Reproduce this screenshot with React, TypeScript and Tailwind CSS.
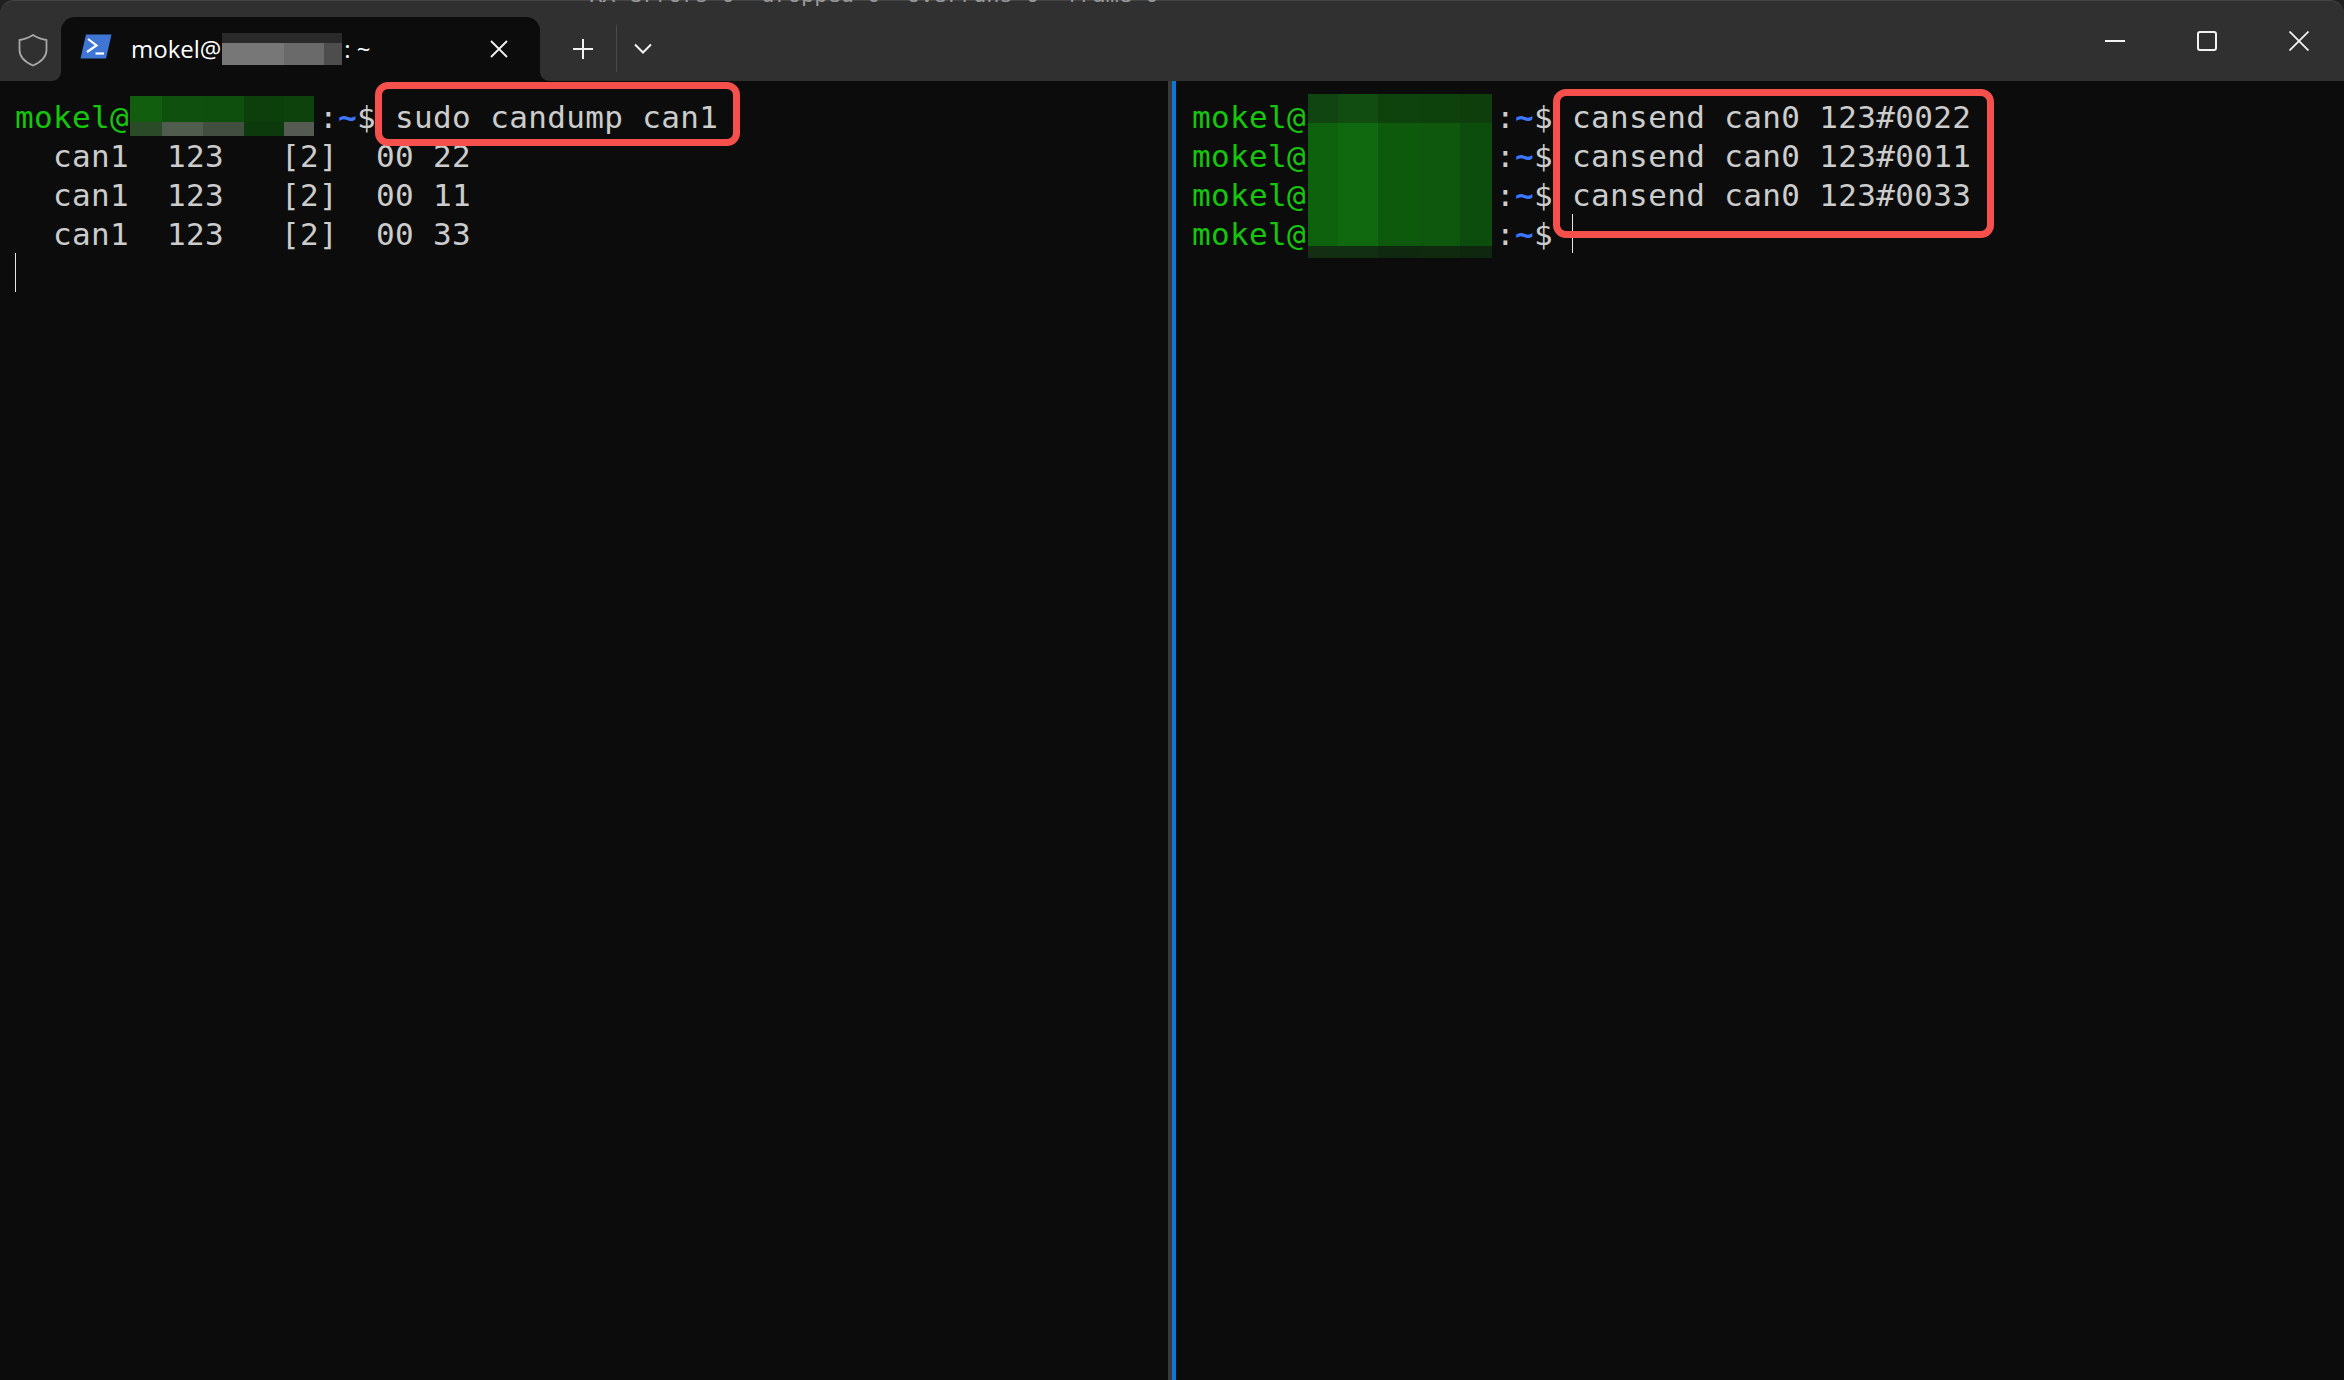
import { ReactNode } from "react";

const mono = "font-['DejaVu_Sans_Mono',monospace] text-[31px] leading-[39px] tracking-[0.34px] whitespace-pre text-[#cccccc]";

// pixelated blur blocks over the host name
const leftCells = [
  "bg-[#125e0f]", "bg-[#10500e]", "bg-[#0f4f0d]", "bg-[#0c3f0b]", "bg-[#0d420c]",
  "bg-[#2a4a28]", "bg-[#505c4e]", "bg-[#424f40]", "bg-[#0c3a0c]", "bg-[#555a52]",
];
const rightCells = [
  "bg-[#104410]", "bg-[#114c10]", "bg-[#0f430e]", "bg-[#0e420d]", "bg-[#0e3e0c]",
  "bg-[#0e620e]", "bg-[#10680f]", "bg-[#0e5a0d]", "bg-[#0e580d]", "bg-[#0c4c0c]",
  "bg-[#142e14]", "bg-[#132f13]", "bg-[#0f280f]", "bg-[#102a10]", "bg-[#0f260f]",
];
const tabCells = [
  "bg-[#2a2a2a]", "bg-[#2a2a2a]", "bg-[#2a2a2a]",
  "bg-[#777777]", "bg-[#6a6a6a]", "bg-[#4d4d4d]",
];

function Prompt({ children }: { children?: ReactNode }) {
  return (
    <div className={mono}>
      <span className="text-[#16c60c]">mokel@</span>
      {"          :"}
      <span className="text-[#3b78ff] font-bold">~</span>
      {"$"}
      {children}
    </div>
  );
}

function Flare({ side }: { side: "left" | "right" }) {
  return (
    <div
      className={
        side === "left"
          ? "absolute bottom-0 -left-[10px] w-[10px] h-[10px] bg-[#0c0c0c]"
          : "absolute bottom-0 -right-[10px] w-[10px] h-[10px] bg-[#0c0c0c]"
      }
    >
      <div
        className={
          side === "left"
            ? "w-full h-full bg-[#303030] rounded-br-[9px]"
            : "w-full h-full bg-[#303030] rounded-bl-[9px]"
        }
      />
    </div>
  );
}

function TitleBar() {
  return (
    <div className="relative flex h-[81px] shrink-0 bg-[#303030] rounded-t-[14px] border-t border-[#454545]">
      <div className="absolute left-[589px] -top-[17px] font-['DejaVu_Sans_Mono',monospace] text-[22px] leading-[22px] whitespace-pre text-[#9a9a9a]">
        RX errors 0  dropped 0  overruns 0  frame 0
      </div>

      <div className="w-[61px] flex items-center justify-center pt-[17px] pl-[4px]">
        <svg width="30" height="34" viewBox="0 0 30 34" fill="none" stroke="#a8a8a8" strokeWidth="1.8" strokeLinejoin="round">
          <path d="M15 2 C20 5 24 6.5 28.5 7 V17 C28.5 24 23 29 15 32.5 C7 29 1.5 24 1.5 17 V7 C6 6.5 10 5 15 2 Z" />
        </svg>
      </div>

      <div className="relative w-[479px] mt-[16px] bg-[#0c0c0c] rounded-t-[14px] flex items-center pl-[19px]">
        <Flare side="left" />
        <Flare side="right" />
        <svg width="32" height="25" viewBox="0 0 32 25" className="shrink-0 -mt-[6px]">
          <path d="M6 0.5 H31.5 L26 24.5 H0.5 Z" fill="#3f76d4" />
          <path d="M8 5 L16.5 11.5 L7 18" fill="none" stroke="#ffffff" strokeWidth="2.2" />
          <path d="M15.5 19.5 H24" fill="none" stroke="#ffffff" strokeWidth="2.2" />
        </svg>
        <div className="relative ml-[19px] font-['Open_Sans',sans-serif] font-medium text-[24px] leading-[32px] whitespace-pre text-white flex items-center">
          <span>mokel@</span>
          <span className="inline-block w-[123px]" />
          <span>: ~</span>
          <div className="absolute left-[91px] top-0 w-[120px] h-[32px] grid grid-cols-[62px_40px_18px] grid-rows-[10px_22px]">
            {tabCells.map((c, i) => (
              <div key={i} className={c} />
            ))}
          </div>
        </div>
        <svg width="18" height="18" viewBox="0 0 18 18" className="absolute left-[429px] top-[23px]" stroke="#f2f2f2" strokeWidth="1.8" fill="none">
          <path d="M1 1 L17 17 M17 1 L1 17" />
        </svg>
      </div>

      <div className="flex items-center pt-[15px] pl-[33px]">
        <svg width="20" height="20" viewBox="0 0 20 20" stroke="#f2f2f2" strokeWidth="2" fill="none">
          <path d="M10 0 V20 M0 10 H20" />
        </svg>
        <div className="w-px h-[47px] bg-[#4a4a4a] ml-[23px]" />
        <svg width="18" height="11" viewBox="0 0 18 11" stroke="#f2f2f2" strokeWidth="2" fill="none" className="ml-[17px]">
          <path d="M1 1.5 L9 9.5 L17 1.5" />
        </svg>
      </div>

      <div className="ml-auto flex h-[79px]">
        <div className="w-[92px] flex items-center justify-center">
          <div className="w-[20px] h-[2px] bg-[#f2f2f2]" />
        </div>
        <div className="w-[92px] flex items-center justify-center">
          <div className="w-[20px] h-[20px] border-2 border-[#f2f2f2] rounded-[3px]" />
        </div>
        <div className="w-[91px] flex items-center justify-center">
          <svg width="20" height="20" viewBox="0 0 20 20" stroke="#f2f2f2" strokeWidth="1.8" fill="none">
            <path d="M0.5 0.5 L19.5 19.5 M19.5 0.5 L0.5 19.5" />
          </svg>
        </div>
      </div>
    </div>
  );
}

function LeftPane() {
  return (
    <div className="relative w-[1168px] shrink-0 pt-[17px] pl-[15px]">
      <Prompt> sudo candump can1</Prompt>
      <div className={mono}>  can1  123   [2]  00 22</div>
      <div className={mono}>  can1  123   [2]  00 11</div>
      <div className={mono}>  can1  123   [2]  00 33</div>
      <div className="w-px h-[39px] -mt-px bg-[#e8e8e8]" />

      <div className="absolute left-[130px] top-[15px] w-[184px] h-[40px] grid grid-cols-[32px_41px_41px_40px_30px] grid-rows-[26px_14px]">
        {leftCells.map((c, i) => (
          <div key={i} className={c} />
        ))}
      </div>
      <div className="absolute left-[375px] top-px w-[365px] h-[64px] border-[7px] border-[#f5504c] rounded-[13px]" />
    </div>
  );
}

function RightPane() {
  return (
    <div className="relative flex-1 pt-[17px] pl-[16px]">
      <Prompt> cansend can0 123#0022</Prompt>
      <Prompt> cansend can0 123#0011</Prompt>
      <Prompt> cansend can0 123#0033</Prompt>
      <div className="flex items-stretch">
        <Prompt> </Prompt>
        <div className="w-px h-[39px] -mt-px bg-[#e8e8e8]" />
      </div>

      <div className="absolute left-[132px] top-[13px] w-[184px] h-[164px] grid grid-cols-[30px_40px_42px_40px_32px] grid-rows-[29px_123px_12px]">
        {rightCells.map((c, i) => (
          <div key={i} className={c} />
        ))}
      </div>
      <div className="absolute left-[377px] top-[8px] w-[441px] h-[149px] border-[7px] border-[#f5504c] rounded-[13px]" />
    </div>
  );
}

export default function App() {
  return (
    <div className="w-[2344px] h-[1380px] overflow-hidden bg-[#1e1e1e] flex flex-col">
      <TitleBar />
      <div className="flex flex-1 bg-[#0c0c0c]">
        <LeftPane />
        <div className="w-[4px] bg-[#3a3a3a] shrink-0" />
        <div className="w-[4px] bg-[#0a78d4] shrink-0" />
        <RightPane />
      </div>
    </div>
  );
}
